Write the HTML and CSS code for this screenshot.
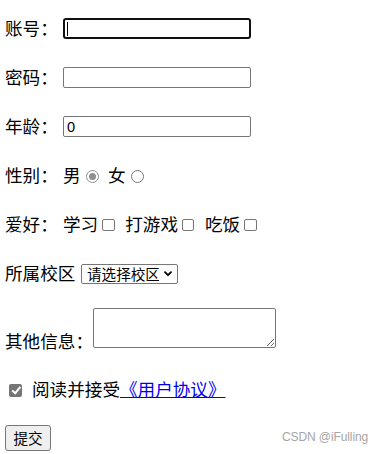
FILE: index.html
```html
<!DOCTYPE html>
<html lang="zh-CN">
<head>
<meta charset="utf-8">
<title>表单</title>
<link rel="stylesheet" href="styles.css">
</head>
<body>
<form class="form">
  <div class="row">
    <span class="label">账号：</span>
    <span class="field-wrap">
      <input class="text-input focused" type="text">
      <span class="caret"></span>
    </span>
  </div>
  <div class="row">
    <span class="label">密码：</span>
    <input class="text-input" type="password">
  </div>
  <div class="row">
    <span class="label">年龄：</span>
    <input class="text-input" type="number" value="0">
  </div>
  <div class="row">
    <span class="label">性别：</span>
    <span class="choice">男</span><input class="radio" type="radio" name="sex" checked>
    <span class="choice choice-next">女</span><input class="radio" type="radio" name="sex">
  </div>
  <div class="row">
    <span class="label">爱好：</span>
    <span class="choice">学习</span><input class="check" type="checkbox">
    <span class="choice choice-next2">打游戏</span><input class="check" type="checkbox">
    <span class="choice choice-next2">吃饭</span><input class="check" type="checkbox">
  </div>
  <div class="row">
    <span class="label-plain">所属校区</span>
    <span class="select-wrap">
      <select class="select">
        <option>请选择校区</option>
      </select>
      <svg class="chevron" width="8" height="6" viewBox="0 0 8 6" aria-hidden="true">
        <path d="M1 1.2 L4 4.2 L7 1.2" fill="none" stroke="#000" stroke-width="1.8" stroke-linecap="round" stroke-linejoin="round"/>
      </svg>
    </span>
  </div>
  <div class="row row-textarea">
    <span class="label-plain">其他信息：</span>
    <textarea class="textarea"></textarea>
  </div>
  <div class="row row-agree">
    <input class="agree" type="checkbox" checked>
    <span class="agree-text">阅读并接受<a class="link" href="#">《用户协议》</a></span>
  </div>
  <div class="row row-submit">
    <button class="submit" type="submit">提交</button>
  </div>
</form>
<div class="watermark">CSDN @iFulling</div>
</body>
</html>
```

FILE: styles.css
```css
html, body {
  margin: 0;
  padding: 0;
  background: #ffffff;
}

body {
  width: 384px;
  height: 454px;
  position: relative;
  overflow: hidden;
  font-family: "Noto Sans CJK SC", "Microsoft YaHei", sans-serif;
  font-size: 17.6px;
  color: #000000;
}

.form {
  display: flex;
  flex-direction: column;
  padding: 18px 0 0 5px;
}

.row {
  display: flex;
  align-items: center;
  height: 21px;
  line-height: 21px;
  margin-top: 28px;
  white-space: nowrap;
}

.row:first-child {
  margin-top: 0;
}

.label,
.label-plain,
.choice,
.agree-text {
  margin-bottom: 2px;
}

.label {
  margin-right: 5.2px;
}

.label-plain {
  margin-right: 5.6px;
}

.field-wrap {
  position: relative;
  display: inline-flex;
}

.caret {
  position: absolute;
  left: 4px;
  top: 4px;
  width: 1px;
  height: 14px;
  background: #000;
}

.text-input {
  box-sizing: border-box;
  width: 188px;
  height: 21px;
  margin: 0;
  padding: 1px 3px;
  border: 1px solid #767676;
  border-radius: 2px;
  font-family: "Liberation Sans", "Noto Sans CJK SC", sans-serif;
  font-size: 14.6px;
  color: #000;
  background: #fff;
  outline: none;
  -moz-appearance: textfield;
}

.text-input::-webkit-outer-spin-button,
.text-input::-webkit-inner-spin-button {
  -webkit-appearance: none;
  margin: 0;
}

.text-input.focused {
  border: 2px solid #101010;
  border-radius: 3px;
}

.choice-next {
  margin-left: 6px;
}

.choice-next2 {
  margin-left: 7.5px;
}

.radio {
  -webkit-appearance: none;
  appearance: none;
  box-sizing: border-box;
  width: 13px;
  height: 13px;
  margin: 1px 3px 0 5.5px;
  border: 1px solid #767676;
  border-radius: 50%;
  background: #fff;
  position: relative;
}

.radio:checked {
  border-color: #8f8f8f;
}

.radio:checked::after {
  content: "";
  position: absolute;
  left: 2px;
  top: 2px;
  width: 7px;
  height: 7px;
  border-radius: 50%;
  background: #8f8f8f;
}

.check {
  -webkit-appearance: none;
  appearance: none;
  box-sizing: border-box;
  width: 12.5px;
  height: 12.5px;
  margin: 1px 3px 0 4px;
  border: 1px solid #767676;
  border-radius: 2px;
  background: #fff;
}

.select-wrap {
  position: relative;
  display: inline-flex;
}

.select {
  -webkit-appearance: none;
  appearance: none;
  box-sizing: border-box;
  width: 97px;
  height: 20px;
  margin: 0;
  padding: 0 18px 0 5px;
  border: 1px solid #767676;
  border-radius: 2px;
  font-family: "Noto Sans CJK SC", sans-serif;
  font-size: 14.6px;
  line-height: 18px;
  color: #000;
  background: #fff;
}

.chevron {
  position: absolute;
  right: 6px;
  top: 7px;
  pointer-events: none;
}

.row-textarea {
  height: 45px;
  align-items: flex-end;
  margin-top: 24px;
}

.row-textarea .label-plain {
  margin-right: 0;
  line-height: 21px;
}

.textarea {
  box-sizing: border-box;
  width: 183px;
  height: 40px;
  margin: 0 0 5px 0;
  padding: 2px;
  border: 1px solid #767676;
  border-radius: 2px;
  resize: both;
  font-size: 14.6px;
  background: #fff;
}

.row-agree {
  margin-top: 26px;
}

.agree {
  -webkit-appearance: none;
  appearance: none;
  box-sizing: border-box;
  width: 13px;
  height: 13px;
  margin: 1px 10px 0 4px;
  border-radius: 2px;
  background: #767676;
  position: relative;
}

.agree::after {
  content: "";
  position: absolute;
  left: 4.5px;
  top: 1.5px;
  width: 3px;
  height: 6.5px;
  border: solid #fff;
  border-width: 0 2px 2px 0;
  transform: rotate(40deg);
}

.link {
  color: #0000ee;
  text-decoration: underline;
}

.row-submit {
  margin-top: 25px;
  height: 26px;
}

.submit {
  box-sizing: border-box;
  width: 46px;
  height: 26px;
  margin: 0;
  padding: 0;
  border: 1px solid #767676;
  border-radius: 3px;
  background: #efefef;
  font-family: "Noto Sans CJK SC", sans-serif;
  font-size: 14.6px;
  line-height: 22px;
  color: #000;
}

.watermark {
  position: absolute;
  left: 282px;
  top: 429px;
  font-family: "Liberation Sans", Arial, sans-serif;
  font-size: 12px;
  line-height: 16px;
  color: #a6a6a6;
  letter-spacing: -0.1px;
}
```
